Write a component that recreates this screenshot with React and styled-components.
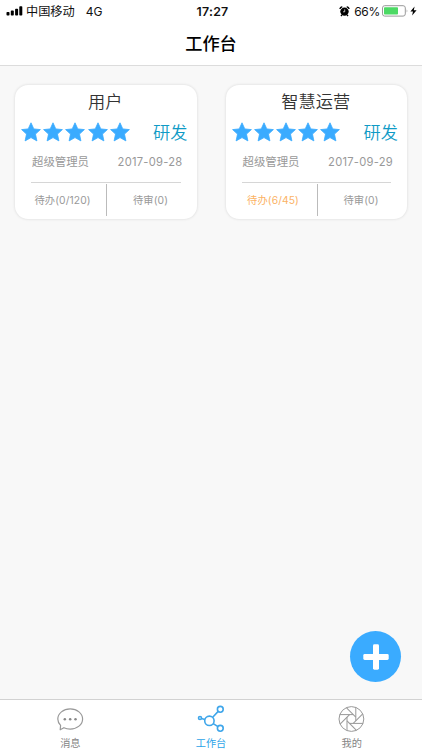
import styled, { createGlobalStyle } from "styled-components";

const GlobalStyle = createGlobalStyle`
  * {
    box-sizing: border-box;
  }
  body {
    margin: 0;
    background: #f8f8f8;
    font-family: Inter, "Noto Sans CJK SC", sans-serif;
  }
`;

const Page = styled.div`
  display: flex;
  flex-direction: column;
  width: 422px;
  height: 750px;
  overflow: hidden;
  background: #f8f8f8;
`;

const Header = styled.header`
  height: 66px;
  background: #fff;
  border-bottom: 1px solid #dcdcdc;
`;

const StatusBar = styled.div`
  display: grid;
  grid-template-columns: 1fr auto 1fr;
  align-items: center;
  height: 22px;
  padding: 0 5px 0 6px;
  font-size: 12px;
  line-height: 22px;
  color: #111;

  svg {
    margin-bottom: 1px;
  }
`;

const StatusLeft = styled.div`
  display: flex;
  align-items: center;
`;

const Carrier = styled.span`
  margin: 1px 11px 0 3px;
  font-size: 12.2px;
`;

const Network = styled.span`
  font-size: 12px;
`;

const Time = styled.span`
  margin-left: 2px;
  font-weight: 600;
  font-size: 12.3px;
  letter-spacing: 0.3px;
`;

const StatusRight = styled.div`
  display: flex;
  align-items: center;
  justify-content: flex-end;
`;

const Percent = styled.span`
  margin: 0 2px 0 4px;
  font-size: 12px;
  letter-spacing: -0.3px;
`;

const Title = styled.h1`
  margin: 0;
  font-size: 17.2px;
  font-weight: 500;
  line-height: 43px;
  text-align: center;
  color: #000;
`;

const Cards = styled.main`
  display: flex;
  flex: 1;
  align-items: flex-start;
  gap: 29px;
  padding: 19px 14px 0 15px;
`;

const Card = styled.section`
  flex: 0 0 181.5px;
  min-width: 0;
  height: 134px;
  border-radius: 13px;
  background: #fff;
  box-shadow: 0 0 3px rgba(0, 0, 0, 0.14);
`;

const CardTitle = styled.h2`
  margin: 0 1px 0 0;
  height: 33px;
  font-size: 17.2px;
  font-weight: 350;
  line-height: 34px;
  text-align: center;
  color: #333;
`;

const Rating = styled.div`
  display: flex;
  align-items: center;
  justify-content: space-between;
  height: 29px;
  padding: 0 9px 0 6px;
`;

const Stars = styled.div`
  display: flex;
  gap: 2.2px;
  margin-bottom: 1px;
`;

const Tag = styled.span`
  font-size: 17.2px;
  line-height: 29px;
  font-weight: 350;
  color: #0f9bc6;
`;

const Meta = styled.div`
  display: flex;
  justify-content: space-between;
  height: 36px;
  margin: 0 16px;
  padding: 0 0 0 1px;
  border-bottom: 1px solid #d6d6d6;
  font-size: 11.4px;
  line-height: 31px;
  color: #999;
`;

const DateText = styled.span`
  margin-right: -2px;
  font-size: 11.2px;
  letter-spacing: 0.25px;
`;

const Counts = styled.div`
  display: flex;
  height: 32px;
  margin: 1px 0 0 4px;
`;

const Count = styled.span`
  flex: 0 0 ${(p) => p.$width}px;
  border-right: ${(p) => (p.$divided ? "1px solid #bbb" : "none")};
  font-size: 10.3px;
  line-height: 33px;
  text-align: center;
  letter-spacing: 0.1px;
  color: ${(p) => (p.$active ? "#fbb264" : "#999")};
`;

const AddButton = styled.button`
  position: absolute;
  left: 350px;
  top: 631px;
  display: flex;
  align-items: center;
  justify-content: center;
  width: 51px;
  height: 51px;
  padding: 0;
  border: 0;
  border-radius: 50%;
  background: #3aabff;
`;

const TabBar = styled.nav`
  display: flex;
  height: 51px;
  border-top: 1px solid #d2d2d2;
  background: #fff;
`;

const Tab = styled.a`
  display: flex;
  flex: 1;
  flex-direction: column;
  align-items: center;
  padding-top: 5px;
  font-size: 10.2px;
  line-height: 14px;
  color: ${(p) => (p.$active ? "#2ba3e8" : "#858585")};

  svg {
    flex: none;
    margin-bottom: 3px;
  }
`;

const SignalIcon = () => (
  <svg width="17" height="10" viewBox="0 0 17 10" fill="#000">
    <rect x="0.5" y="6" width="3" height="3.5" rx="0.8" />
    <rect x="4.8" y="4.6" width="3" height="4.9" rx="0.8" />
    <rect x="9.1" y="2.7" width="3" height="6.8" rx="0.8" />
    <rect x="13.3" y="0.3" width="3" height="9.2" rx="0.8" />
  </svg>
);

const AlarmIcon = () => (
  <svg width="11" height="11" viewBox="0 0 11 11">
    <path d="M1 3A2 2 0 0 1 3.3 1.1M7.7 1.1A2 2 0 0 1 10 3M2.9 8.8L2 10M8.1 8.8L9 10" stroke="#000" strokeWidth="1.4" fill="none" />
    <circle cx="5.5" cy="5.6" r="4.2" fill="#000" />
    <path d="M5.7 3.4V5.8H4" stroke="#fff" strokeWidth="0.7" fill="none" />
  </svg>
);

const BatteryIcon = () => (
  <svg width="28" height="12" viewBox="0 0 28 12">
    <rect x="0.5" y="0.7" width="22.8" height="10.4" rx="2.2" fill="#fff" stroke="#999" />
    <rect x="2" y="2.2" width="14" height="7.4" rx="0.8" fill="#4cd964" />
    <path d="M24.7 4.2Q26.2 5.9 24.7 7.6Z" fill="#999" />
  </svg>
);

const BoltIcon = () => (
  <svg width="7" height="10" viewBox="0 0 7 10">
    <path d="M4.6 0.4L0.4 5.4H3L2.1 9.6L6.6 4.3H3.8Z" fill="#000" />
  </svg>
);

const StarIcon = () => (
  <svg width="20" height="20" viewBox="0 0 20 20">
    <path
      d="M10 0.8L12.8 6.9L19.4 7.6L14.5 12.1L15.9 18.9L10 15.6L4.1 18.9L5.5 12.1L0.6 7.6L7.2 6.9Z"
      fill="#3aabff"
      stroke="#3aabff"
      strokeWidth="0.8"
      strokeLinejoin="round"
    />
  </svg>
);

const PlusIcon = () => (
  <svg width="26" height="26" viewBox="0 0 26 26" fill="#fff">
    <rect x="0.3" y="10" width="25.4" height="6" rx="1.4" />
    <rect x="10" y="0.3" width="6" height="25.4" rx="1.4" />
  </svg>
);

const MessageIcon = () => (
  <svg width="28" height="28" viewBox="0 0 28 28" fill="none" stroke="#999" strokeWidth="1.2">
    <path d="M4.6 20.4C2.8 18.6 1.8 16.4 1.8 14C1.8 8.4 7.3 3.9 14.2 3.9S26.6 8.4 26.6 14S21.1 24.1 14.2 24.1C11.9 24.1 9.7 23.6 7.9 22.7L4.2 24.8Z" strokeLinejoin="round" />
    <g fill="#888" stroke="none">
      <circle cx="8.8" cy="14.2" r="1.25" />
      <circle cx="14.2" cy="14.2" r="1.25" />
      <circle cx="19.5" cy="14.2" r="1.25" />
    </g>
  </svg>
);

const WorkbenchIcon = () => (
  <svg width="28" height="28" viewBox="0 0 28 28" fill="none" stroke="#3fa6ea" strokeWidth="1.6">
    <circle cx="12.4" cy="15.8" r="4.7" />
    <circle cx="3" cy="13" r="1.5" />
    <circle cx="23.3" cy="4.3" r="2.9" />
    <circle cx="23.3" cy="23.3" r="2.9" />
    <path d="M4.5 13.5L7.9 14.5M15.7 12.3L21.2 6.4M16.2 18.6L21 21.7" />
  </svg>
);

const blades = [0, 45, 90, 135, 180, 225, 270, 315];

const ApertureIcon = () => (
  <svg width="28" height="28" viewBox="0 0 28 28" fill="none" stroke="#999" strokeWidth="1">
    <circle cx="13.4" cy="14" r="12.4" />
    {blades.map((angle) => (
      <path key={angle} d="M15.2 9.6H1.8" transform={`rotate(${angle} 13.4 14)`} />
    ))}
  </svg>
);

const projects = [
  { name: "用户", date: "2017-09-28", todo: "0/120", active: false },
  { name: "智慧运营", date: "2017-09-29", todo: "6/45", active: true },
];

const ProjectCard = ({ name, date, todo, active }) => (
  <Card>
    <CardTitle>{name}</CardTitle>
    <Rating>
      <Stars>
        {[1, 2, 3, 4, 5].map((n) => (
          <StarIcon key={n} />
        ))}
      </Stars>
      <Tag>研发</Tag>
    </Rating>
    <Meta>
      <span>超级管理员</span>
      <DateText>{date}</DateText>
    </Meta>
    <Counts>
      <Count $width={88} $active={active} $divided>
        待办({todo})
      </Count>
      <Count $width={87}>待审(0)</Count>
    </Counts>
  </Card>
);

const App = () => {
  return (
    <>
      <GlobalStyle />
      <Page>
        <Header>
          <StatusBar>
            <StatusLeft>
              <SignalIcon />
              <Carrier>中国移动</Carrier>
              <Network>4G</Network>
            </StatusLeft>
            <Time>17:27</Time>
            <StatusRight>
              <AlarmIcon />
              <Percent>66%</Percent>
              <BatteryIcon />
              <BoltIcon />
            </StatusRight>
          </StatusBar>
          <Title>工作台</Title>
        </Header>
        <Cards>
          {projects.map((project) => (
            <ProjectCard key={project.name} {...project} />
          ))}
        </Cards>
        <AddButton aria-label="add">
          <PlusIcon />
        </AddButton>
        <TabBar>
          <Tab>
            <MessageIcon />
            消息
          </Tab>
          <Tab $active>
            <WorkbenchIcon />
            工作台
          </Tab>
          <Tab>
            <ApertureIcon />
            我的
          </Tab>
        </TabBar>
      </Page>
    </>
  );
};

export default App;
